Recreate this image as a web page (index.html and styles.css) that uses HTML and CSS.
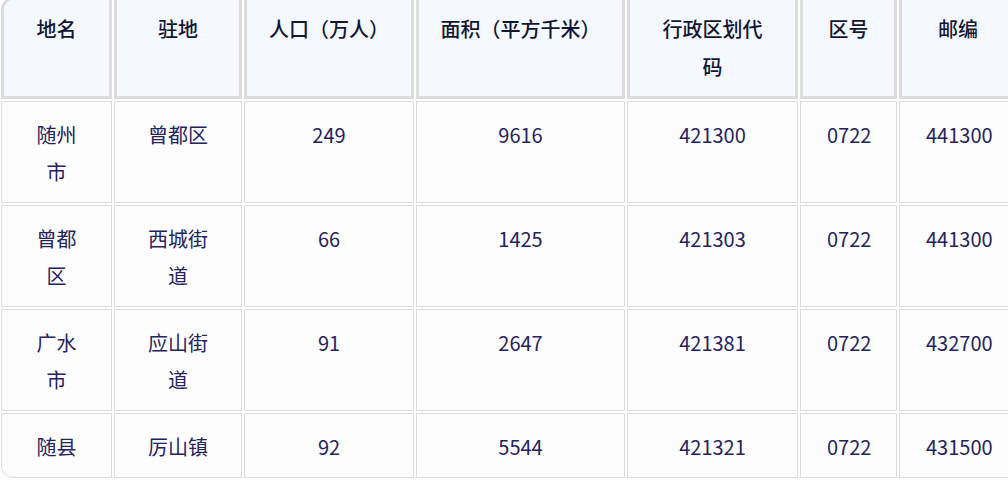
FILE: index.html
```html
<!DOCTYPE html>
<html lang="zh-CN">
<head>
<meta charset="utf-8">
<title>随州市行政区划</title>
<link rel="stylesheet" href="styles.css">
</head>
<body>
<table class="region-table">
  <colgroup>
    <col class="c1"><col class="c2"><col class="c3"><col class="c4"><col class="c5"><col class="c6"><col class="c7">
  </colgroup>
  <thead>
    <tr>
      <th>地名</th>
      <th>驻地</th>
      <th class="wide">人口（万人）</th>
      <th class="wide">面积（平方千米）</th>
      <th>行政区划代码</th>
      <th class="wide">区号</th>
      <th>邮编</th>
    </tr>
  </thead>
  <tbody>
    <tr>
      <td>随州市</td>
      <td>曾都区</td>
      <td>249</td>
      <td>9616</td>
      <td>421300</td>
      <td>0722</td>
      <td>441300</td>
    </tr>
    <tr>
      <td>曾都区</td>
      <td>西城街道</td>
      <td>66</td>
      <td>1425</td>
      <td>421303</td>
      <td>0722</td>
      <td>441300</td>
    </tr>
    <tr>
      <td>广水市</td>
      <td>应山街道</td>
      <td>91</td>
      <td>2647</td>
      <td>421381</td>
      <td>0722</td>
      <td>432700</td>
    </tr>
    <tr>
      <td>随县</td>
      <td>厉山镇</td>
      <td>92</td>
      <td>5544</td>
      <td>421321</td>
      <td>0722</td>
      <td>431500</td>
    </tr>
  </tbody>
</table>
</body>
</html>
```
FILE: styles.css
```css
html, body {
  margin: 0;
  padding: 0;
  background: #ffffff;
  overflow: hidden;
}

body {
  font-family: "Noto Sans CJK SC", "Noto Sans", sans-serif;
  font-size: 20px;
}

.region-table {
  table-layout: fixed;
  border-collapse: separate;
  border-spacing: 2px;
  margin: -6px 0 0 -1px;
  width: 1018px;
}

.c1 { width: 111px; }
.c2 { width: 128px; }
.c3 { width: 170px; }
.c4 { width: 209px; }
.c5 { width: 171px; }
.c6 { width: 97px; }
.c7 { width: 118px; }

.region-table th,
.region-table td {
  box-sizing: border-box;
  text-align: center;
  vertical-align: top;
  padding-left: 26px;
  padding-right: 26px;
}

.region-table th {
  background: #f5f8ff;
  border: 3px solid #dcdcdc;
  color: #111733;
  font-weight: 500;
  line-height: 38px;
  padding-top: 11px;
  padding-bottom: 10px;
}

.region-table th.wide {
  padding-left: 16px;
  padding-right: 16px;
}

.region-table td {
  background: #fdfdfd;
  border: 1px solid #dcdcdc;
  color: #25235e;
  line-height: 37px;
  padding-top: 14px;
  padding-bottom: 12px;
}

.region-table thead th:first-child {
  border-top-left-radius: 14px;
}

.region-table tbody tr:last-child td:first-child {
  border-bottom-left-radius: 12px;
}
```
